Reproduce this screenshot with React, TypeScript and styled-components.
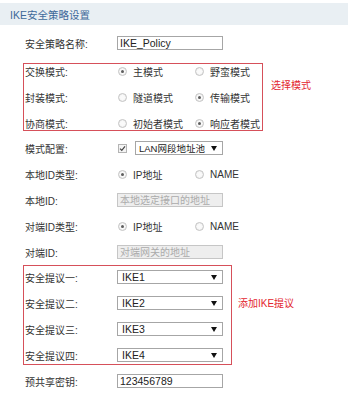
import styled, { createGlobalStyle } from "styled-components";

const GlobalStyle = createGlobalStyle`
  html, body {
    margin: 0;
    padding: 0;
    background: #fff;
  }
  body {
    font-family: "Liberation Sans", "Noto Sans CJK SC", sans-serif;
    font-size: 10px;
    color: #333;
  }
`;

const Page = styled.div`
  width: 348px;
  height: 400px;
  overflow: hidden;
  padding-top: 3px;
  box-sizing: border-box;
`;

const Header = styled.div`
  height: 22px;
  display: flex;
  align-items: center;
  padding-left: 10px;
  background: #e9eff3;
  color: #40699a;
  font-size: 10.5px;
`;

const Form = styled.div`
  display: flex;
  flex-direction: column;
  padding: 5px 0 0 23px;
`;

const Row = styled.div<{ $boxed?: boolean }>`
  display: flex;
  align-items: center;
  height: ${(p) => (p.$boxed ? 14 : 26)}px;
  padding-left: ${(p) => (p.$boxed ? 1 : 2)}px;
`;

const Label = styled.div`
  width: 92px;
  flex: none;
  white-space: nowrap;
`;

const Section = styled.div<{ $top: number; $bottom: number }>`
  display: flex;
  align-items: flex-start;
  margin: ${(p) => p.$top}px 0 ${(p) => p.$bottom}px;
`;

const Box = styled.div<{ $w: number; $pt: number; $pb: number }>`
  width: ${(p) => p.$w}px;
  box-sizing: border-box;
  border: 1px solid #d6505a;
  padding: ${(p) => p.$pt}px 0 ${(p) => p.$pb}px;
  display: flex;
  flex-direction: column;
  gap: 12px;
`;

const Note = styled.div<{ $top: number; $left: number }>`
  margin: ${(p) => p.$top}px 0 0 ${(p) => p.$left}px;
  color: #e3262f;
  white-space: nowrap;
`;

const Option = styled.div`
  display: flex;
  align-items: center;
  gap: 6px;
  width: 77px;
  white-space: nowrap;
`;

const Options = styled.div`
  display: flex;
  padding-left: 1px;
`;

const Radio = styled.span<{ $on?: boolean }>`
  width: 9px;
  height: 9px;
  flex: none;
  box-sizing: border-box;
  border-radius: 50%;
  border: 1px solid #c4c4c4;
  background: radial-gradient(circle, #fafafa 40%, #e6e6e6 100%);
  display: flex;
  align-items: center;
  justify-content: center;
  &::after {
    content: "";
    display: ${(p) => (p.$on ? "block" : "none")};
    width: 3px;
    height: 3px;
    border-radius: 50%;
    background: #5e5e5e;
  }
`;

const Check = styled.span`
  width: 9px;
  height: 9px;
  flex: none;
  box-sizing: border-box;
  margin-left: 1px;
  border: 1px solid #b4b4b4;
  background: #f4f4f4;
  display: flex;
  align-items: center;
  justify-content: center;
`;

const Select = styled.div<{ $w?: number; $ml?: number; $small?: boolean }>`
  width: ${(p) => p.$w ?? 106}px;
  height: 14px;
  margin-left: ${(p) => p.$ml ?? 0}px;
  box-sizing: border-box;
  border: 1px solid #a6a6a6;
  background: #fff;
  display: flex;
  align-items: center;
  justify-content: space-between;
  padding: ${(p) => (p.$small ? "0 5px 0 3px" : "0 5px 0 4px")};
  color: #222;
  font-size: ${(p) => (p.$small ? 9.5 : 10.5)}px;
  white-space: nowrap;
  overflow: hidden;
`;

const Arrow = styled.span`
  flex: none;
  width: 0;
  height: 0;
  border-left: 3px solid transparent;
  border-right: 3px solid transparent;
  border-top: 5px solid #111;
`;

const Input = styled.input`
  width: 106px;
  height: 14px;
  box-sizing: border-box;
  margin: 0;
  padding: 0 0 0 2px;
  border: 1px solid #a6a6a6;
  background: #fff;
  color: #222;
  font-family: "Liberation Sans", "Noto Sans CJK SC", sans-serif;
  font-size: 10.5px;
  outline: none;
  &:disabled {
    background: #eeeeee;
    border-color: #c6c6c6;
  }
  &::placeholder {
    color: #ababab;
    font-size: 10px;
  }
`;

type Choice = [string, string, number];

const Choices = ({ items }: { items: Choice }) => (
  <Options>
    <Option>
      <Radio $on={items[2] === 0} />
      {items[0]}
    </Option>
    <Option>
      <Radio $on={items[2] === 1} />
      {items[1]}
    </Option>
  </Options>
);

const modes: [string, Choice][] = [
  ["交换模式:", ["主模式", "野蛮模式", 0]],
  ["封装模式:", ["隧道模式", "传输模式", 1]],
  ["协商模式:", ["初始者模式", "响应者模式", 1]],
];

const proposals = [
  ["安全提议一:", "IKE1"],
  ["安全提议二:", "IKE2"],
  ["安全提议三:", "IKE3"],
  ["安全提议四:", "IKE4"],
];

export default function App() {
  return (
    <Page>
      <GlobalStyle />
      <Header>IKE安全策略设置</Header>
      <Form>
        <Row>
          <Label>安全策略名称:</Label>
          <Input readOnly value="IKE_Policy" />
        </Row>

        <Section $top={7} $bottom={4}>
          <Box $w={240} $pt={0} $pb={0}>
            {modes.map(([label, items]) => (
              <Row $boxed key={label}>
                <Label>{label}</Label>
                <Choices items={items} />
              </Row>
            ))}
          </Box>
          <Note $top={14} $left={8}>选择模式</Note>
        </Section>

        <Row>
          <Label>模式配置:</Label>
          <Check>
            <svg width="7" height="7" viewBox="0 0 7 7">
              <path d="M1 3.6 L2.8 5.4 L6 1.4" fill="none" stroke="#444" strokeWidth="1.2" />
            </svg>
          </Check>
          <Select $w={88} $ml={8} $small>
            LAN网段地址池
            <Arrow />
          </Select>
        </Row>
        <Row>
          <Label>本地ID类型:</Label>
          <Choices items={["IP地址", "NAME", 0]} />
        </Row>
        <Row>
          <Label>本地ID:</Label>
          <Input disabled placeholder="本地选定接口的地址" />
        </Row>
        <Row>
          <Label>对端ID类型:</Label>
          <Choices items={["IP地址", "NAME", 0]} />
        </Row>
        <Row>
          <Label>对端ID:</Label>
          <Input disabled placeholder="对端网关的地址" />
        </Row>

        <Section $top={0} $bottom={3}>
          <Box $w={209} $pt={4} $pb={2}>
            {proposals.map(([label, value]) => (
              <Row $boxed key={label}>
                <Label>{label}</Label>
                <Select>
                  {value}
                  <Arrow />
                </Select>
              </Row>
            ))}
          </Box>
          <Note $top={30} $left={6}>添加IKE提议</Note>
        </Section>

        <Row>
          <Label>预共享密钥:</Label>
          <Input readOnly value="123456789" />
        </Row>
        <Row>
          <Label />
          <Input readOnly value="" />
        </Row>
      </Form>
    </Page>
  );
}
